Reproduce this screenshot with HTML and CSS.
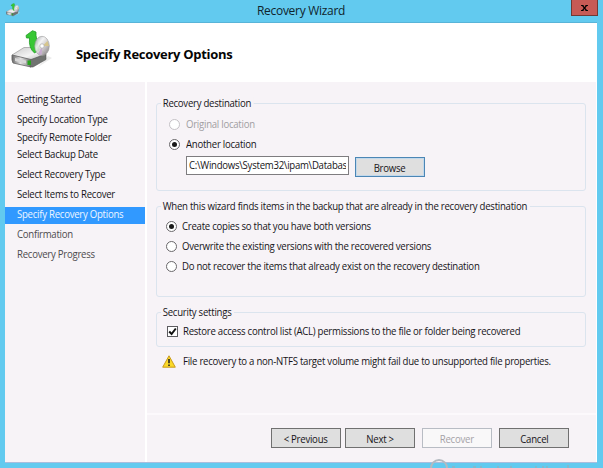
FILE: index.html
```html
<!DOCTYPE html>
<html lang="en">
<head>
<meta charset="utf-8">
<title>Recovery Wizard</title>
<link rel="stylesheet" href="styles.css">
</head>
<body>
<svg width="0" height="0" class="defs" aria-hidden="true">
  <defs>
    <linearGradient id="drive-top" x1="0" y1="0" x2="1" y2="1"><stop offset="0" stop-color="#c9c9c9"/><stop offset=".55" stop-color="#f4f4f4"/><stop offset="1" stop-color="#a9a9a9"/></linearGradient>
    <linearGradient id="drive-front" x1="0" y1="0" x2="1" y2="0"><stop offset="0" stop-color="#666"/><stop offset=".45" stop-color="#e2e2e2"/><stop offset="1" stop-color="#777"/></linearGradient>
    <linearGradient id="disc" x1="0" y1="0" x2="1" y2="1"><stop offset="0" stop-color="#9a9aa2"/><stop offset=".35" stop-color="#f3f3f3"/><stop offset=".6" stop-color="#c8c4c6"/><stop offset="1" stop-color="#6e6a6c"/></linearGradient>
    <symbol id="recovery" viewBox="0 0 44 40">
      <path d="M27 37 41 28 37 26z" fill="#ddd" opacity=".6"/>
      <path d="M1 25 13 17.500H27L35 24 20 30.500z" fill="url(#drive-top)" stroke="#999" stroke-width=".7"/>
      <path d="M1 25 20 29.500V37L2 33Q.5 31 1 25z" fill="url(#drive-front)" stroke="#666" stroke-width=".8"/>
      <path d="M20 29.500 35 24V29.500L22 37H19V30.500z" fill="#707370" stroke="#555" stroke-width=".6"/>
      <path d="M4 28 15 30.500V33.500L4 31z" fill="#d8d8d8"/>
      <rect x="16.500" y="30.500" width="3.500" height="4.500" fill="#28a51e"/>
      <path d="M15 5.500 21.500 .7 25 2V5.500Q26 12 28 20L23.500 23Q17.500 18 18.500 8L15.500 8z" fill="#38c734" stroke="#219c25" stroke-width=".8"/>
      <ellipse cx="31" cy="16" rx="7.300" ry="9.700" fill="url(#disc)" fill-opacity=".9" stroke="#999" stroke-width=".6"/>
      <path d="M31.500 16 36.500 11 38 16z" fill="#d6c58c"/>
      <path d="M31.500 16 27 24 30.500 25z" fill="#c7abd1"/>
      <circle cx="31" cy="16" r="2.200" fill="#fff" stroke="#aaa" stroke-width=".7"/>
    </symbol>
  </defs>
</svg>
<div class="window">
  <header class="titlebar">
    <svg class="app-icon"><use href="#recovery"/></svg>
    <span class="caption">Recovery Wizard</span>
    <button class="close" aria-label="Close"><svg viewBox="0 0 8 7"><path d="M0 .5H3M5 .5H8M0 6.500H3M5 6.500H8M1.500 .5 6.500 6.500M6.500 .5 1.500 6.500" fill="none" stroke="#000" stroke-width="1.500"/></svg></button>
  </header>
  <div class="client">
    <div class="banner">
      <svg class="banner-icon"><use href="#recovery"/></svg>
      <h1>Specify Recovery Options</h1>
    </div>
    <div class="body">
      <nav class="steps">
        <div><span>Getting Started</span></div>
        <div class="short"><span>Specify Location Type</span></div>
        <div class="short"><span>Specify Remote Folder</span></div>
        <div><span>Select Backup Date</span></div>
        <div><span>Select Recovery Type</span></div>
        <div><span>Select Items to Recover</span></div>
        <div class="current"><span>Specify Recovery Options</span></div>
        <div class="pending"><span>Confirmation</span></div>
        <div class="pending"><span>Recovery Progress</span></div>
      </nav>
      <main class="page">
        <section class="group destination">
          <h2>Recovery destination</h2>
          <label class="option disabled"><i class="radio"></i><span>Original location</span></label>
          <label class="option"><i class="radio on"></i><span>Another location</span></label>
          <div class="path-row">
            <div class="path"><div class="path-view"><span>C:\Windows\System32\ipam\Database</span></div></div>
            <button class="btn browse"><span>Browse</span></button>
          </div>
        </section>
        <section class="group conflict">
          <h2>When this wizard finds items in the backup that are already in the recovery destination</h2>
          <label class="option"><i class="radio on"></i><span>Create copies so that you have both versions</span></label>
          <label class="option"><i class="radio"></i><span>Overwrite the existing versions with the recovered versions</span></label>
          <label class="option"><i class="radio"></i><span>Do not recover the items that already exist on the recovery destination</span></label>
        </section>
        <section class="group security">
          <h2>Security settings</h2>
          <label class="option"><i class="check"><svg viewBox="0 0 9 9"><path d="M1.200 4.500 3.600 7 7.800 1.500" fill="none" stroke="#111" stroke-width="2"/></svg></i><span>Restore access control list (ACL) permissions to the file or folder being recovered</span></label>
        </section>
        <div class="warning">
          <svg viewBox="0 0 14 13"><path d="M7 .8 13.300 12.200H.7z" fill="#fbd927" stroke="#c99a1c" stroke-linejoin="round"/><path d="M7 4V8.300M7 9.500V11" stroke="#222" stroke-width="1.600"/></svg>
          <span>File recovery to a non-NTFS target volume might fail due to unsupported file properties.</span>
        </div>
        <footer class="actions">
          <button class="btn prev"><span>&lt; Previous</span></button>
          <button class="btn next"><span>Next &gt;</span></button>
          <button class="btn off"><span>Recover</span></button>
          <button class="btn"><span>Cancel</span></button>
        </footer>
      </main>
    </div>
  </div>
  <svg class="mark" viewBox="0 0 145 9"><circle cx="9" cy="9" r="8" fill="none" stroke="#b3bac0" stroke-width="2"/><path d="M22 8H25M43 8H46M51 7V9M68 7V9M81 7V9M106 7V9M113 7V9M117 7V9M138 6V9" stroke="#a2a9b0"/></svg>
</div>
</body>
</html>
```
FILE: styles.css
```css
* { box-sizing: border-box; }
body { margin: 0; font: 11.2px/16px "Open Sans", "Noto Sans", sans-serif; color: #161418; letter-spacing: -0.3px; }
h1, h2 { margin: 0; }
span, h1, h2 { white-space: nowrap; }
button { font: inherit; letter-spacing: inherit; color: inherit; padding: 0; }
.defs { position: absolute; }

/* Condensed interface lettering */
.body span, h2 { display: inline-block; transform: scaleX(.858); transform-origin: 0 50%; }
.body .btn span { transform-origin: 50% 50%; }

.window { position: relative; width: 603px; height: 468px; padding: 0 6px 5px 5px; background: #62caef; overflow: hidden; display: flex; flex-direction: column; }
.titlebar { height: 23px; flex: none; display: flex; align-items: flex-start; }
.app-icon { width: 15px; height: 14px; margin: 3px 0 0 1px; }
.caption { margin-left: 236px; font-size: 13px; line-height: 21px; letter-spacing: -0.3px; color: #10242c; transform: scaleX(.92); transform-origin: 0 50%; }
.close { width: 27px; height: 16px; margin: 0 -1px 0 auto; border: 1px solid #713934; border-top: 0; background: #c75a55; display: flex; justify-content: center; align-items: center; }
.close svg { width: 7px; height: 6px; }
.client { flex: 1; background: #fff; border-right: 1px solid #fff; box-shadow: 0 -1px #58b4d8, 0 1px #a8bddd; display: flex; flex-direction: column; margin-bottom: 1px; }
.banner { height: 59px; display: flex; flex: none; }
.banner-icon { width: 44px; height: 40px; margin: 7px 0 0 6px; }
h1 { margin: 20px 0 0 21px; font-size: 13px; line-height: 22px; font-weight: 700; color: #050505; letter-spacing: -0.3px; }
.body { flex: 1; display: flex; gap: 2px; }
.steps { width: 140px; flex: none; background: #f7f3f7; display: flex; flex-direction: column; padding-top: 7px; }
.steps div { height: 20px; line-height: 19px; padding-left: 12px; }
.steps .short { height: 17.5px; }
.steps .current { height: 17px; line-height: 13px; margin-top: 3px; background: #3199ff; color: #eef6ff; }
.steps .pending { color: #4d4a4d; }
.page { flex: 1; min-width: 0; background: #f7f3f7; padding: 21px 10px 0 9px; display: flex; flex-direction: column; }
.group { border: 1px solid #dbe4ee; border-radius: 3px; flex: none; }
h2 { display: block; width: max-content; height: 12px; margin: -7px 0 0 4px; padding: 0 3px 0 2px; background: #f7f3f7; font-size: inherit; line-height: 12px; font-weight: 400; }
.option { height: 20px; display: flex; align-items: center; }
.radio { flex: none; width: 11px; height: 11px; border: 1px solid #6a686b; border-radius: 50%; background: #fff; display: grid; place-items: center; }
.radio.on::after { content: ""; width: 5px; height: 5px; border-radius: 50%; background: #191919; }
.disabled { color: #a19ea2; }
.disabled .radio { border-color: #c5c2c6; }
.destination { height: 88px; }
.destination .option { padding-left: 12px; gap: 6px; }
.destination h2 { margin-bottom: 5px; }
.path-row { display: flex; padding-left: 29px; gap: 6px; margin-top: 2px; }
.path { width: 163px; height: 19px; padding: 0 2px; border: 1px solid #7e7c7f; background: #fff; line-height: 16px; }
.path-view { height: 17px; overflow: hidden; white-space: nowrap; }
.btn { flex: none; width: 70px; height: 20px; border: 1px solid #707070; background: #dfdfdf; line-height: 17px; }
.browse { border-color: #4b86b5; box-shadow: inset 0 0 0 1px #c2d8eb; margin-top: 1px; }
.conflict { height: 91px; margin-top: 15px; }
.conflict h2 { margin-bottom: 4px; }
.conflict .option { padding-left: 9px; gap: 5px; }
.security { height: 35px; margin-top: 15px; }
.security .option { padding-left: 10px; gap: 5px; margin-top: 3px; }
.check { flex: none; width: 11px; height: 11px; border: 1px solid #5d5c60; background: #fff; display: grid; place-items: center; }
.check svg { width: 9px; height: 9px; }
.warning { display: flex; align-items: center; height: 20px; margin-top: 4px; padding-left: 6px; gap: 7px; }
.warning svg { flex: none; width: 14px; height: 13px; }
.actions { margin: auto -10px 0 -9px; height: 49px; border-top: 2px solid #fcf9fc; padding: 13px 0 0 124px; display: flex; }
.prev { margin-right: 4px; }
.next { margin-right: 7px; }
.off { margin-right: 7px; border-color: #b8bcc4; background: #f9f8f9; color: #a5a2a7; }
.mark { position: absolute; left: 430px; top: 459px; width: 145px; height: 9px; }
```
